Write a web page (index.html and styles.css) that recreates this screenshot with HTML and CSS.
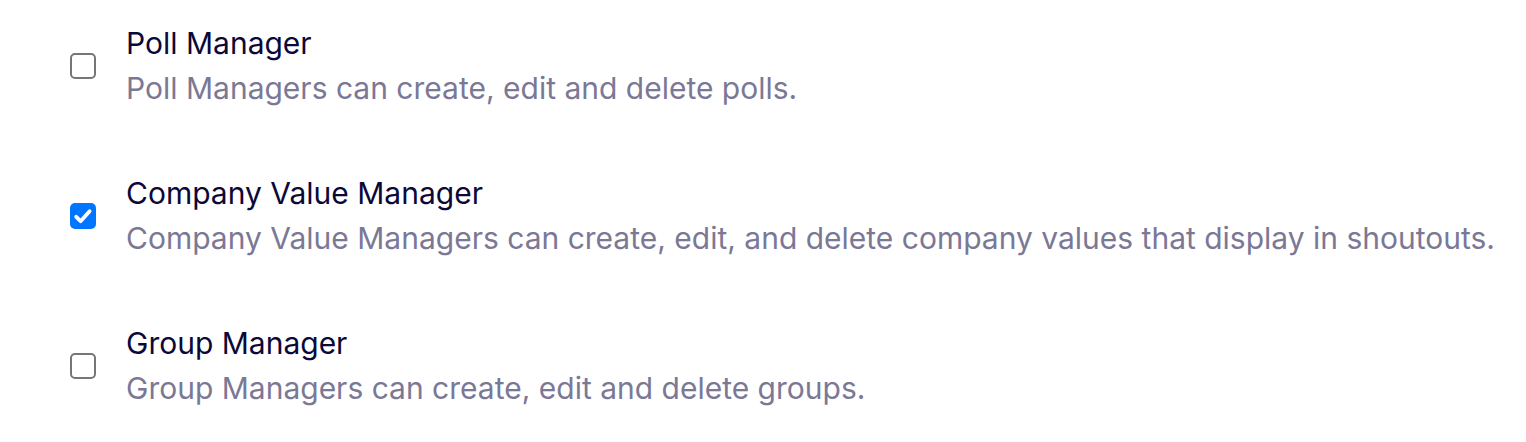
FILE: index.html
```html
<!DOCTYPE html>
<html lang="en">
<head>
  <meta charset="UTF-8">
  <meta name="viewport" content="width=device-width, initial-scale=1.0">
  <title>Roles</title>
  <link rel="stylesheet" href="styles.css">
</head>
<body>
  <div class="role-list">
    <label class="role">
      <span class="check"></span>
      <span class="role-text">
        <span class="role-name">Poll Manager</span>
        <span class="role-desc">Poll Managers can create, edit and delete polls.</span>
      </span>
    </label>
    <label class="role">
      <span class="check checked">
        <svg viewBox="0 0 26 26" width="26" height="26"><path d="M6.2 13.8 L10.6 18.2 L19.6 8.2" fill="none" stroke="#fff" stroke-width="3.8" stroke-linecap="round" stroke-linejoin="round"/></svg>
      </span>
      <span class="role-text">
        <span class="role-name">Company Value Manager</span>
        <span class="role-desc">Company Value Managers can create, edit, and delete company values that display in shoutouts.</span>
      </span>
    </label>
    <label class="role">
      <span class="check"></span>
      <span class="role-text">
        <span class="role-name">Group Manager</span>
        <span class="role-desc">Group Managers can create, edit and delete groups.</span>
      </span>
    </label>
  </div>
</body>
</html>
```

FILE: styles.css
```css
body {
  margin: 0;
  background: #fff;
  font-family: Inter, "Noto Sans", sans-serif;
}

.role-list {
  display: flex;
  flex-direction: column;
  gap: 60px;
  padding: 21px 0 0 70px;
}
.role {
  display: flex;
  align-items: center;
  gap: 30px;
}
.check {
  flex: none;
  box-sizing: border-box;
  width: 26px;
  height: 26px;
  border: 2px solid #767676;
  border-radius: 5px;
  background: #fff;
}
.check.checked {
  border: none;
  background: #0075ff;
}
.check svg {
  display: block;
}
.role-text {
  display: flex;
  flex-direction: column;
}
.role-name {
  font-size: 30px;
  line-height: 45px;
  color: #0c0838;
}
.role-desc {
  font-size: 30px;
  line-height: 45px;
  color: #7b7896;
}
```
